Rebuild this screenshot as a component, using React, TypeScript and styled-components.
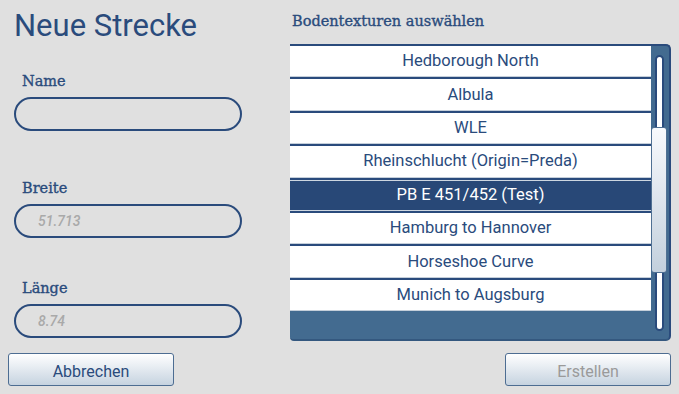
import React from "react";
import styled, { createGlobalStyle } from "styled-components";

const GlobalStyle = createGlobalStyle`
  html, body {
    margin: 0;
    padding: 0;
    background: #e0e0e0;
  }
  * {
    box-sizing: border-box;
  }
`;

const dark = "#2a4b7c";
const sans = `Roboto, "Liberation Sans", sans-serif`;
const slab = `"DejaVu Serif", "Liberation Serif", serif`;

const Page = styled.div`
  width: 679px;
  height: 394px;
  padding: 8px;
  display: grid;
  grid-template-columns: 234px 381px;
  grid-template-rows: 333px 33px;
  column-gap: 48px;
  row-gap: 12px;
  background: #e0e0e0;
  font-family: ${sans};
  color: ${dark};
`;

const LeftColumn = styled.div`
  display: flex;
  flex-direction: column;
  padding-left: 6px;
`;

const Title = styled.h1`
  margin: 0;
  font-family: ${sans};
  font-weight: 400;
  font-size: 31px;
  line-height: 36px;
  color: ${dark};
`;

const Label = styled.div<{ $top: number }>`
  margin-top: ${(p) => p.$top}px;
  padding-left: 8px;
  font-family: ${slab};
  font-size: 14.5px;
  line-height: 18px;
  color: ${dark};
  -webkit-text-stroke: 0.35px ${dark};
`;

const TextField = styled.input`
  margin-top: 7px;
  width: 228px;
  height: 34px;
  border: 2px solid ${dark};
  border-radius: 17px;
  background: transparent;
  padding: 0 22px;
  font-family: ${sans};
  font-size: 14px;
  color: ${dark};
  outline: none;

  &::placeholder {
    color: #a9a9a9;
    font-style: italic;
    font-weight: 500;
  }
`;

const RightColumn = styled.div`
  display: flex;
  flex-direction: column;
`;

const ListTitle = styled.div`
  margin-top: 4px;
  padding-left: 2px;
  font-family: ${slab};
  font-size: 14.5px;
  line-height: 18px;
  color: ${dark};
  -webkit-text-stroke: 0.35px ${dark};
`;

const Panel = styled.div`
  margin-top: 14px;
  height: 297px;
  display: flex;
  background: #436b90;
  border-top: 2px solid ${dark};
  border-right: 2px solid ${dark};
  border-bottom: 2px solid #34587f;
  border-radius: 0 5px 5px 4px;
`;

const List = styled.div`
  flex: 1;
  display: flex;
  flex-direction: column;
`;

const Row = styled.div<{ $selected?: boolean; $first?: boolean }>`
  height: ${(p) => (p.$first ? 31.4 : 33.4)}px;
  display: flex;
  align-items: center;
  justify-content: center;
  padding-bottom: 1px;
  font-size: 16.5px;
  background: ${(p) => (p.$selected ? "#284877" : "#ffffff")};
  color: ${(p) => (p.$selected ? "#ffffff" : dark)};
  border-top: ${(p) => (p.$first ? "none" : `2px solid ${dark}`)};
  border-bottom: 1px solid ${(p) => (p.$selected ? "#cdd6e0" : "#c5cfda")};
  box-shadow: ${(p) => (p.$selected ? "inset 0 1px 0 #cdd6e0" : "none")};
`;

const ScrollArea = styled.div`
  width: 18px;
  position: relative;
  padding: 9px 0 8px 4px;
`;

const Track = styled.div`
  width: 9px;
  height: 100%;
  background: #ffffff;
  border: 2px solid ${dark};
  border-radius: 5px;
`;

const Thumb = styled.div`
  position: absolute;
  left: 0;
  top: 81px;
  width: 16px;
  height: 146px;
  border: 1px solid #4f7093;
  border-radius: 3px;
  background: linear-gradient(#f7f9fc, #c3d0dd);
`;

const Button = styled.button<{ $disabled?: boolean }>`
  width: 166px;
  height: 33px;
  border: 1px solid #4d6d92;
  border-radius: 3px;
  background: linear-gradient(#ffffff, #c6d3e0);
  font-family: ${sans};
  font-size: 16px;
  color: ${(p) => (p.$disabled ? "#9a9a9a" : dark)};
  padding: 3px 0 0;
`;

const Footer = styled.div<{ $end?: boolean }>`
  display: flex;
  justify-content: ${(p) => (p.$end ? "flex-end" : "flex-start")};
  align-items: center;
`;

const tracks = [
  "Hedborough North",
  "Albula",
  "WLE",
  "Rheinschlucht (Origin=Preda)",
  "PB E 451/452 (Test)",
  "Hamburg to Hannover",
  "Horseshoe Curve",
  "Munich to Augsburg",
];

const App: React.FC = () => {
  return (
    <Page>
      <GlobalStyle />
      <LeftColumn>
        <Title>Neue Strecke</Title>
        <Label $top={28}>Name</Label>
        <TextField />
        <Label $top={48}>Breite</Label>
        <TextField placeholder="51.713" />
        <Label $top={41}>Länge</Label>
        <TextField placeholder="8.74" />
      </LeftColumn>
      <RightColumn>
        <ListTitle>Bodentexturen auswählen</ListTitle>
        <Panel>
          <List>
            {tracks.map((t, i) => (
              <Row key={t} $first={i === 0} $selected={i === 4}>
                {t}
              </Row>
            ))}
          </List>
          <ScrollArea>
            <Track />
            <Thumb />
          </ScrollArea>
        </Panel>
      </RightColumn>
      <Footer>
        <Button>Abbrechen</Button>
      </Footer>
      <Footer $end>
        <Button $disabled>Erstellen</Button>
      </Footer>
    </Page>
  );
};

export default App;
